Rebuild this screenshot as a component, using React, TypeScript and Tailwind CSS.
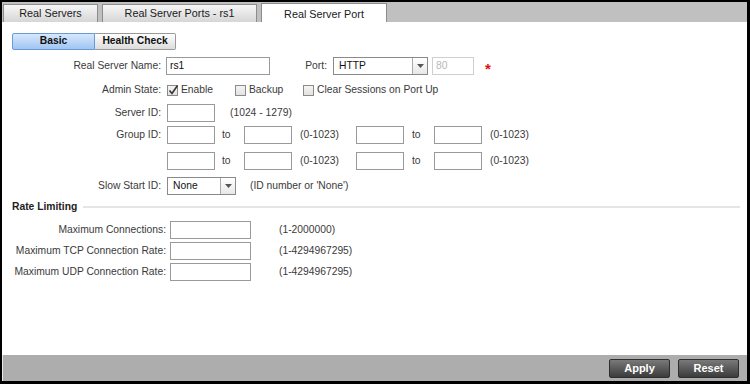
import React from "react";

const font = { fontFamily: '"Liberation Sans", Arial, sans-serif' };

const TextBox = ({ w, value, disabled }: { w: string; value?: string; disabled?: boolean }) => (
  <div
    className={`${w} h-[18px] border bg-white px-[3px] flex items-center ${
      disabled ? "border-[#cfcfcf] text-[#b8b8b8]" : "border-[#9a9a9a] text-[#111]"
    }`}
  >
    {value}
  </div>
);

const Select = ({ w, value }: { w: string; value: string }) => (
  <div className={`${w} h-[18px] border border-[#8a8a8a] bg-white flex text-[#111]`}>
    <div className="flex-1 flex items-center px-[5px]">{value}</div>
    <div className="w-[15px] border-l border-[#aaa] bg-gradient-to-b from-white to-[#e8e8e8] flex items-center justify-center">
      <svg width="7" height="4" viewBox="0 0 7 4">
        <path d="M0 0h7L3.5 4z" fill="#555" />
      </svg>
    </div>
  </div>
);

const Check = ({ checked, label }: { checked?: boolean; label: string }) => (
  <div className="flex items-center gap-[3px]">
    <div className="w-[11px] h-[11px] border border-[#8a8a8a] bg-gradient-to-b from-[#f4f4f4] to-[#e2e2e2] relative">
      {checked && (
        <svg className="absolute -top-[2px] left-0" width="11" height="12" viewBox="0 0 11 12">
          <path d="M1.5 6.5l2.5 3l5.5-8" stroke="#333" strokeWidth="1.6" fill="none" />
        </svg>
      )}
    </div>
    <span>{label}</span>
  </div>
);

const Label = ({ children }: { children?: React.ReactNode }) => (
  <div className="w-[160px] shrink-0 text-right pr-[1px]">{children}</div>
);

const App = () => {
  return (
    <div
      className="w-[750px] h-[384px] bg-black pt-[2px] pl-[2px] pr-[3px] pb-[3px] text-[10.3px] text-[#3a3a3a] leading-none"
      style={font}
    >
      <div className="w-[745px] h-[379px] flex flex-col bg-white">
        {/* top tabs */}
        <div className="h-[20px] bg-[#c0c0c0] flex items-end pl-[1px] gap-[4px] text-[10.8px]">
          <div className="w-[95px] h-[18px] border border-b-0 border-[#8c8c8c] bg-gradient-to-b from-[#f6f6f6] to-[#d6d6d6] flex items-center justify-center text-[#1a1a1a]">
            Real Servers
          </div>
          <div className="w-[155px] h-[18px] border border-b-0 border-[#8c8c8c] bg-gradient-to-b from-[#f6f6f6] to-[#d6d6d6] flex items-center justify-center text-[#1a1a1a]">
            Real Server Ports - rs1
          </div>
          <div className="w-[126px] h-[19px] border border-b-0 border-[#8c8c8c] bg-white flex items-center justify-center text-[#1a1a1a] pt-[2px]">
            Real Server Port
          </div>
        </div>

        {/* content */}
        <div className="flex-1 flex flex-col">
          <div className="flex mt-[11px] ml-[10px] h-[17px]">
            <div className="w-[83px] border border-[#6b9bd6] rounded-l-[2px] bg-gradient-to-b from-[#d8e8fc] to-[#9fc5f2] flex items-center justify-center font-bold text-[#111]">
              Basic
            </div>
            <div className="w-[81px] border border-l-0 border-[#9a9a9a] rounded-r-[2px] bg-gradient-to-b from-white to-[#dcdcdc] flex items-center justify-center font-bold text-[#111]">
              Health Check
            </div>
          </div>

          <div className="flex items-center h-[18px] mt-[7px] gap-[4px]">
            <Label>Real Server Name:</Label>
            <TextBox w="w-[104px]" value="rs1" />
            <div className="w-[54px] text-right pr-[1px]">Port:</div>
            <div className="ml-[1px]">
              <Select w="w-[95px]" value="HTTP" />
            </div>
            <TextBox w="w-[42px]" value="80" disabled />
            <span className="ml-[7px] text-[#e01010] text-[15px] font-bold leading-none mt-[4px]">*</span>
          </div>

          <div className="flex items-center h-[18px] mt-[6px] gap-[5px]">
            <Label>Admin State:</Label>
            <div className="w-[63px]">
              <Check checked label="Enable" />
            </div>
            <div className="w-[63px]">
              <Check label="Backup" />
            </div>
            <Check label="Clear Sessions on Port Up" />
          </div>

          <div className="flex items-center h-[18px] mt-[5px] gap-[5px]">
            <Label>Server ID:</Label>
            <TextBox w="w-[48px]" />
            <span className="ml-[10px]">(1024 - 1279)</span>
          </div>

          <div className="flex items-center h-[18px] mt-[4px] gap-[5px]">
            <Label>Group ID:</Label>
            <GroupRange />
          </div>

          <div className="flex items-center h-[18px] mt-[8px] gap-[5px]">
            <Label />
            <GroupRange />
          </div>

          <div className="flex items-center h-[18px] mt-[7px] gap-[5px]">
            <Label>Slow Start ID:</Label>
            <Select w="w-[69px]" value="None" />
            <span className="ml-[9px]">(ID number or 'None')</span>
          </div>

          <div className="flex items-center h-[18px] mt-[3px] ml-[10px] mr-[7px] gap-[6px]">
            <span className="font-bold text-[#222]">Rate Limiting</span>
            <div className="flex-1 h-[2px] bg-[#e4e6e4]" />
          </div>

          <RateRow mt="mt-[5px]" label="Maximum Connections:" hint="(1-2000000)" />
          <RateRow mt="mt-[3px]" label="Maximum TCP Connection Rate:" hint="(1-4294967295)" />
          <RateRow mt="mt-[3px]" label="Maximum UDP Connection Rate:" hint="(1-4294967295)" />
        </div>

        {/* footer */}
        <div className="h-[26px] bg-[#adadad] flex items-center justify-end gap-[8px] pr-[8px] pl-[2px] border-l border-[#e8e8e8]">
          <FooterButton>Apply</FooterButton>
          <FooterButton>Reset</FooterButton>
        </div>
      </div>
    </div>
  );
};

const GroupRange = () => (
  <div className="flex items-center">
    <TextBox w="w-[48px]" />
    <span className="w-[29px] pl-[7px]">to</span>
    <TextBox w="w-[48px]" />
    <span className="w-[64px] pl-[8px]">(0-1023)</span>
    <TextBox w="w-[48px]" />
    <span className="w-[30px] pl-[8px]">to</span>
    <TextBox w="w-[48px]" />
    <span className="pl-[8px]">(0-1023)</span>
  </div>
);

const RateRow = ({ mt, label, hint }: { mt: string; label: string; hint: string }) => (
  <div className={`flex items-center h-[18px] ${mt} gap-[4px]`}>
    <div className="w-[164px] shrink-0 text-right">{label}</div>
    <TextBox w="w-[81px]" />
    <span className="ml-[24px]">{hint}</span>
  </div>
);

const FooterButton = ({ children }: { children: React.ReactNode }) => (
  <div className="w-[61px] h-[19px] rounded-[2px] border border-[#2e2e2e] bg-gradient-to-b from-[#7a7a7a] to-[#3c3c3c] flex items-center justify-center text-white font-bold text-[11px]">
    {children}
  </div>
);

export default App;
